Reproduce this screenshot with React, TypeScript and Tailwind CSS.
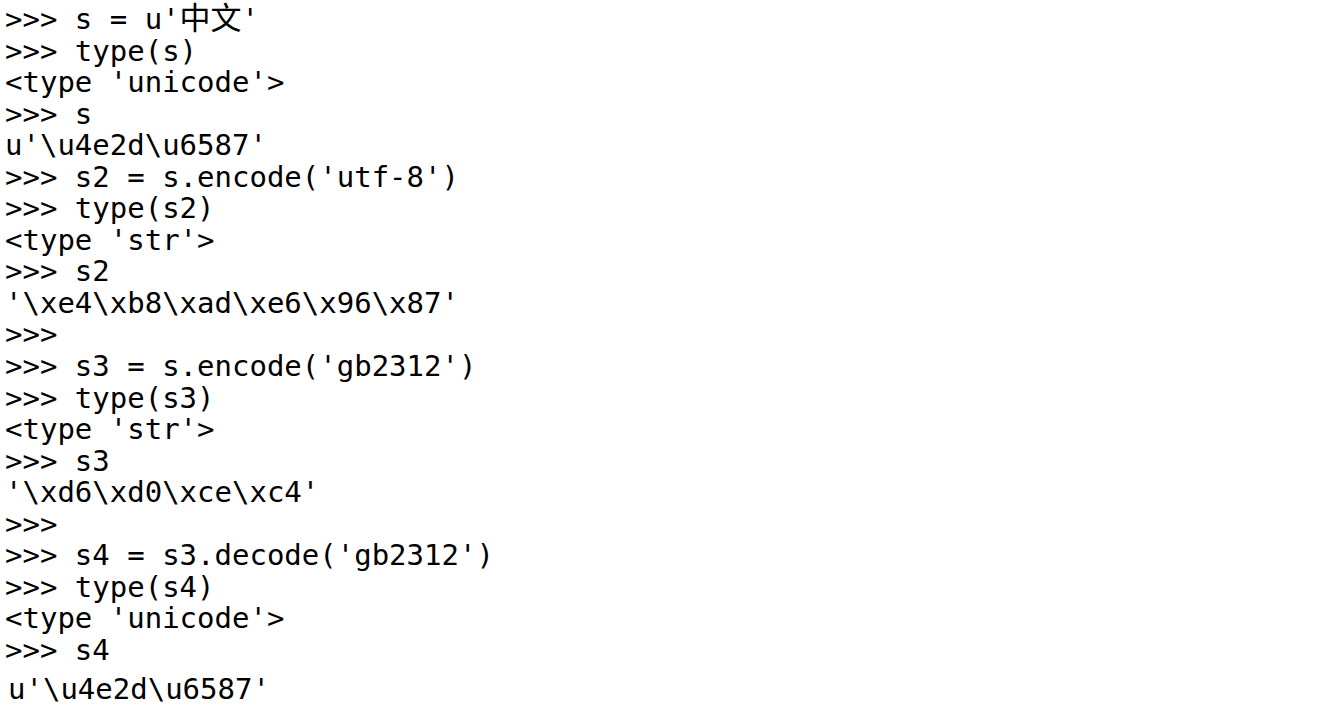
const lines = [
  ">>> type(s)",
  "<type 'unicode'>",
  ">>> s",
  "u'\\u4e2d\\u6587'",
  ">>> s2 = s.encode('utf-8')",
  ">>> type(s2)",
  "<type 'str'>",
  ">>> s2",
  "'\\xe4\\xb8\\xad\\xe6\\x96\\x87'",
  ">>>",
  ">>> s3 = s.encode('gb2312')",
  ">>> type(s3)",
  "<type 'str'>",
  ">>> s3",
  "'\\xd6\\xd0\\xce\\xc4'",
  ">>>",
  ">>> s4 = s3.decode('gb2312')",
  ">>> type(s4)",
  "<type 'unicode'>",
  ">>> s4",
];

export default function App() {
  return (
    <div className="w-[1328px] h-[706px] overflow-hidden bg-white text-black">
      <div className="pl-[5px] pt-[3px] font-['DejaVu_Sans_Mono','Noto_Sans_CJK_SC',monospace] text-[29px] leading-[31.55px] whitespace-pre">
        <div>
          {">>> s = u'"}
          <span className="text-[31px] leading-none">中文</span>
          {"'"}
        </div>
        {lines.map((line, i) => (
          <div key={i}>{line}</div>
        ))}
        <div className="mt-[9px] pl-[3px] leading-[28px]">u'\u4e2d\u6587'</div>
      </div>
    </div>
  );
}
